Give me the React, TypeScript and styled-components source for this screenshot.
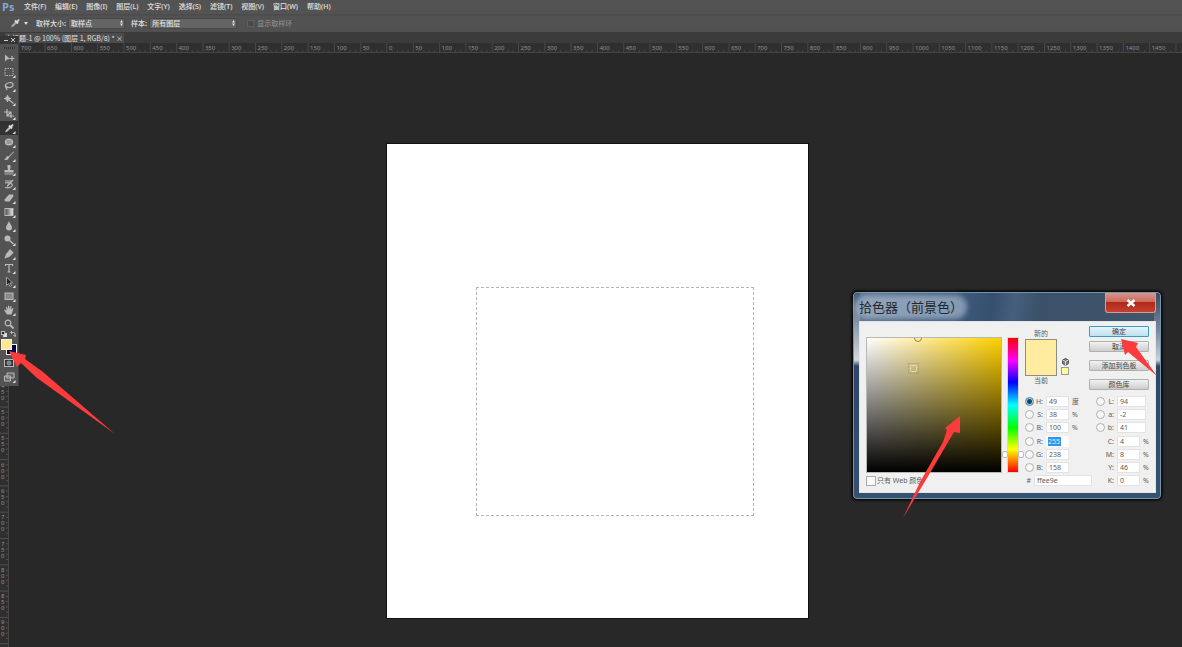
import React, { useEffect, useState } from 'react';
import styled, { createGlobalStyle, css } from 'styled-components';

const GlobalStyle = createGlobalStyle`
  * { box-sizing: border-box; }
  html, body, #root { height: 100%; }
  body {
    margin: 0;
    background: #282828;
    font-family: "Noto Sans", "Noto Sans CJK SC", sans-serif;
    font-size: 7px;
    line-height: 10px;
    color: #e2e2e2;
  }
  button, input, select { font: inherit; color: inherit; margin: 0; padding: 0; }
`;

const UI_CJK = '"Noto Sans CJK SC", "Noto Sans", sans-serif';

/* ---------- frame ---------- */

const Shell = styled.div`
  position: relative;
  display: flex;
  flex-direction: column;
  height: 100vh;
  overflow: hidden;
`;

const MenuBar = styled.nav`
  display: flex;
  align-items: center;
  gap: 1px;
  height: 14px;
  background: #535353;
`;

const Brand = styled.span`
  width: 19px;
  padding-left: 2px;
  font: 700 11px/14px "Open Sans", sans-serif;
  color: #7fa9d0;
`;

const MenuButton = styled.button`
  height: 14px;
  padding: 0 4px;
  border: 0;
  background: none;
  line-height: 14px;
  font-weight: 500;
  white-space: nowrap;
`;

const OptionsBar = styled.div`
  display: flex;
  align-items: center;
  height: 19px;
  padding-left: 10px;
  background: linear-gradient(#4a4a4a, #535353 3px, #505050);
  border-bottom: 1px solid #3a3a3a;
  font-family: ${UI_CJK};
  font-weight: 500;
`;

const ToolPreset = styled.button`
  display: flex;
  align-items: center;
  gap: 4px;
  width: 26px;
  height: 12px;
  border: 0;
  background: none;
`;

const OptionLabel = styled.label`
  padding-right: 2px;
  white-space: nowrap;
`;

const SelectBox = styled.span<{ $width: number }>`
  display: flex;
  align-items: center;
  width: ${(p) => p.$width}px;
  height: 11px;
  margin-right: 6px;
  padding-right: 1px;
  background: #646464;
  border: 1px solid #484848;
`;

const PlainSelect = styled.select`
  flex: 1;
  min-width: 0;
  height: 9px;
  padding-left: 2px;
  border: 0;
  background: none;
  appearance: none;
  line-height: 9px;
`;

const RingOption = styled.label`
  display: flex;
  align-items: center;
  gap: 3px;
  padding-left: 4px;
  color: #8a8a8a;
`;

const DarkCheck = styled.input`
  appearance: none;
  width: 7px;
  height: 7px;
  border: 1px solid #5e5e5e;
  background: #484848;
`;

const TabBar = styled.div`
  display: flex;
  height: 10px;
  padding-left: 5px;
  background: #3b3b3b;
`;

const DocTab = styled.div`
  display: flex;
  justify-content: space-between;
  width: 119px;
  padding-right: 2px;
  background: #4c4c4c;
  font-family: ${UI_CJK};
  white-space: nowrap;
`;

const TabClose = styled.button`
  width: 6px;
  height: 10px;
  border: 0;
  background: none;
  line-height: 10px;
`;

const TopRuler = styled.svg`
  flex: none;
  display: block;
  width: 100%;
  height: 10px;
  background: #2f2f2f;
  border-bottom: 1px solid #444;
`;

const Workspace = styled.div`
  display: flex;
  flex: 1;
  min-height: 0;
`;

const SideRuler = styled.svg`
  flex: none;
  width: 9px;
  height: 100%;
  background: #2f2f2f;
  border-right: 1px solid #484848;
`;

const Stage = styled.main`
  position: relative;
  flex: 1;
  overflow: hidden;
  background: #282828;
`;

const Artboard = styled.section`
  position: absolute;
  left: 377px;
  top: 90px;
  width: 423px;
  height: 476px;
  border: 1px solid #111;
  background: #fff;
`;

const Marquee = styled.div`
  position: absolute;
  left: 89px;
  top: 143px;
  width: 278px;
  height: 229px;
  border: 1px dashed #b4b4b4;
`;

/* ---------- tools ---------- */

const ToolPanel = styled.aside`
  position: absolute;
  left: 0;
  top: 36px;
  width: 19px;
  padding-bottom: 2px;
  background: #535353;
  border-right: 1px solid #404040;
`;

const ToolHead = styled.div`
  display: flex;
  align-items: center;
  justify-content: flex-end;
  gap: 3px;
  height: 8px;
  padding-right: 2px;
  background: #353535;
`;

const Grip = styled.div`
  width: 11px;
  height: 2px;
  margin: 3px auto 2px;
  background: repeating-linear-gradient(90deg, #333 0 1px, #535353 1px 2px);
`;

const ToolButton = styled.button<{ $active?: boolean }>`
  display: flex;
  align-items: center;
  justify-content: center;
  width: 18px;
  height: 14px;
  border: 0;
  background: ${(p) => (p.$active ? '#323232' : 'none')};
  color: #bababa;
`;

const MiniRow = styled.div`
  display: flex;
  justify-content: space-between;
  padding: 0 2px 2px 1px;
  color: #bababa;
`;

const SwatchPair = styled.div`
  position: relative;
  height: 17px;
`;

const ToolSwatch = styled.button<{ $color: string; $back?: boolean }>`
  position: absolute;
  width: 11px;
  height: 11px;
  border: 1px solid #f4f0dc;
  background: ${(p) => p.$color};
  ${(p) => (p.$back ? css`right: 1px; bottom: 1px;` : css`left: 1px; top: 0;`)}
`;

/* ---------- colour picker ---------- */

const Dialog = styled.form`
  position: absolute;
  right: 20px;
  top: 238px;
  width: 310px;
  padding: 0 5px 6px 6px;
  border: 1px solid #0a0a0a;
  border-radius: 5px;
  box-shadow: inset 0 0 0 1px #6f97ad, 0 0 2px 1px #111;
  background:
    linear-gradient(#40597a 0, #9aa7b6 40px, #d3d8dd 68px, #2e4663 74px, #36526f) left / 7px 100% no-repeat,
    linear-gradient(#33475e 0, #7d8c9d 40px, #c9d2da 68px, #2e4663 74px, #36526f) right / 7px 100% no-repeat,
    linear-gradient(100deg, #5c7390 0, #3e597d 35%, #364f6e 45%, #465f7c 52%, #3a5169 60%, #3f566c 100%) top / 100% 40px no-repeat,
    #36526f;
  color: #5c5c5c;
`;

const TitleBar = styled.header`
  display: flex;
  justify-content: space-between;
  height: 29px;
`;

const Title = styled.h1`
  height: 16px;
  margin: 7px 0 0;
  border-radius: 8px;
  background: rgba(190, 205, 222, 0.55);
  box-shadow: 0 0 5px 4px rgba(190, 205, 222, 0.55);
  font: 400 13px/16px ${UI_CJK};
  color: #23282f;
  white-space: nowrap;
`;

const CloseButton = styled.button`
  display: flex;
  align-items: center;
  justify-content: center;
  width: 51px;
  height: 20px;
  margin-top: 1px;
  border: 1px solid #d99a92;
  border-top: 0;
  border-radius: 0 0 3px 3px;
  background: linear-gradient(#d9968c 0, #cc6a5c 45%, #b02a1a 50%, #c4412f 100%);
`;

const Client = styled.div`
  display: flex;
  height: 172px;
  padding-left: 6px;
  border: 1px solid #e2e6ea;
  background: #f0f0f0;
`;

const FieldColumn = styled.div`
  width: 136px;
  padding-top: 15px;
`;

const ColorField = styled.div`
  position: relative;
  height: 136px;
  border: 1px solid #b9b9b4;
  background: linear-gradient(transparent, #000), linear-gradient(90deg, #fff, #ffd000);
  overflow: hidden;
`;

const FieldMarks = styled.svg`
  display: block;
`;

const CheckLabel = styled.label`
  display: flex;
  align-items: center;
  gap: 1px;
  margin-top: 3px;
`;

const WebCheck = styled.input`
  appearance: none;
  width: 10px;
  height: 10px;
  border: 1px solid #aaa;
  background: #fafafa;
`;

const HueColumn = styled.div`
  position: relative;
  width: 23px;
  padding: 15px 6px 0 5px;
`;

const HueBar = styled.div`
  height: 136px;
  background: linear-gradient(#f00, #f0f 17%, #00f 33%, #0ff 50%, #0f0 67%, #ff0 83%, #f00);
  border: 1px solid #d5d5d5;
`;

const HueKnobs = styled.div`
  position: absolute;
  left: 0;
  right: 1px;
  top: 129px;
  display: flex;
  justify-content: space-between;
  &::before, &::after {
    content: "";
    width: 4px;
    height: 5px;
    border: 1px solid #bcbcbc;
    border-radius: 2px;
    background: #fff;
  }
`;

const Controls = styled.div`
  flex: 1;
  min-width: 0;
`;

const UpperControls = styled.div`
  display: flex;
  height: 73px;
`;

const Preview = styled.div`
  display: flex;
  flex-direction: column;
  align-items: center;
  width: 32px;
  padding-top: 7px;
`;

const PreviewColor = styled.div`
  width: 32px;
  height: 37px;
  border: 1px solid #8f8c80;
  background: #ffec9e;
`;

const Warnings = styled.div`
  display: flex;
  flex-direction: column;
  align-items: center;
  gap: 1px;
  width: 16px;
  padding-top: 36px;
`;

const SafeSwatch = styled.button`
  width: 8px;
  height: 8px;
  border: 1px solid #9c9c8c;
  background: #ffffa0;
`;

const ButtonColumn = styled.div`
  display: flex;
  flex-direction: column;
  margin-left: 16px;
  padding-top: 4px;
`;

const PushButton = styled.button<{ $primary?: boolean; $gap?: number }>`
  width: 60px;
  height: 11px;
  margin-bottom: ${(p) => p.$gap ?? 8}px;
  border: 1px solid ${(p) => (p.$primary ? '#3f9bc4' : '#b0b0b0')};
  border-radius: 1px;
  background: ${(p) =>
    p.$primary ? 'linear-gradient(#e6f3f8, #bfe2f0)' : 'linear-gradient(#f2f2f2, #cdcdcd)'};
  line-height: 9px;
  font-family: ${UI_CJK};
  color: #444;
`;

const LowerControls = styled.div`
  display: flex;
  gap: 4px;
`;

const Rows = styled.div`
  display: flex;
  flex-direction: column;
  gap: 1px;
`;

const LeftRows = styled(Rows)`
  width: 67px;
`;

const Group = styled.div`
  display: flex;
  flex-direction: column;
`;

const FieldRow = styled.div`
  display: flex;
  align-items: center;
  height: 13px;
`;

const Radio = styled.input`
  appearance: none;
  flex: none;
  width: 9px;
  height: 9px;
  border: 1px solid #b0b0b0;
  border-radius: 50%;
  background: #f8f8f8;
  &:checked {
    border-color: #5f7f92;
    background: radial-gradient(#0c4a6b 0 2px, #a9d3e4 3px);
  }
`;

const RowLabel = styled.label<{ $width: number }>`
  width: ${(p) => p.$width}px;
  padding-right: 3px;
  text-align: right;
`;

const Value = styled.input<{ $width: number }>`
  width: ${(p) => p.$width}px;
  height: 11px;
  padding-left: 2px;
  border: 1px solid #e3e3e3;
  background: #fff;
  line-height: 9px;
`;

const SelectedValue = styled(Value)`
  padding: 0;
  border-width: 1px 8px 1px 2px;
  border-color: #fff;
  background: #3294e8;
  color: #d7ecff;
`;

const Unit = styled.span`
  padding-left: 3px;
`;

/* Hand-drawn callout arrows lie over everything else. */
const Callout = styled.svg<{ $x: number; $y: number }>`
  position: absolute;
  left: ${(p) => p.$x}px;
  top: ${(p) => p.$y}px;
  overflow: visible;
  pointer-events: none;
  fill: #fb3b3c;
`;

/* ---------- data ---------- */

const menus = ['文件(F)', '编辑(E)', '图像(I)', '图层(L)', '文字(Y)', '选择(S)', '滤镜(T)', '视图(V)', '窗口(W)', '帮助(H)'];

const line = { fill: 'none', stroke: 'currentColor', strokeWidth: 1.2 } as const;

const tools: { name: string; plain?: boolean; art: React.ReactNode }[] = [
  { name: '移动', plain: true, art: <><path d="M1 1.5v7l2-2 3-.5z" fill="currentColor" /><path d="M8 3v5M5.5 5.5h5" {...line} /></> },
  { name: '矩形选框', art: <rect x="1" y="1.5" width="8" height="7" {...line} strokeWidth="1" strokeDasharray="1.5 1" /> },
  { name: '套索', art: <path d="M2 6.500C0 4 3 1.5 6.500 1.500c4 .2 3 4.500-.5 5C3.500 7 1.500 5.500 2.500 5M2 6.500l1 2.500" {...line} /> },
  { name: '快速选择', art: <><circle cx="3.500" cy="3.500" r="2.300" fill="currentColor" /><path d="M4 4l5.500 4.500M0 3.500h7M3.500 0v7" {...line} /></> },
  { name: '裁剪', art: <path d="M3 0v7h7M0 3h7v6M3 7l4-4" {...line} /> },
  { name: '吸管', art: <><path d="M1 9.500l1-2.500 4-4 1.500 1.500-4 4z" fill="#bbb" /><path d="M5 2.500l3 3M7 4l2-2.500" stroke="#ddd" strokeWidth="2" /></> },
  { name: '修复画笔', art: <><ellipse cx="5" cy="5" rx="4.200" ry="3.600" fill="currentColor" /><path d="M2.500 4h5M2.500 6h5" stroke="#777" /></> },
  { name: '画笔', art: <path d="M9.500.5L4.500 5.500 3.500 5C2 5.500 2 8 0 8.500c2 1 4.500.5 5-2L10 1z" fill="currentColor" /> },
  { name: '仿制图章', art: <path d="M3.500 0h3v2.500L6 5h3.500v2.500h-9V5H4l-.5-2.500zM.5 8.500h9v1h-9z" fill="currentColor" /> },
  { name: '历史记录画笔', art: <path d="M1 2h7L3 7.500M1 4c4-1 8 0 7 3-1 2-5 2-7 1.500M9 1L4 6" {...line} /> },
  { name: '橡皮擦', art: <path d="M5 1.500h4.500L9 4 5.500 8.500H1L.5 6.500z" fill="currentColor" /> },
  { name: '渐变', art: <><defs><linearGradient id="toolGrad"><stop stopColor="#444" /><stop offset="1" stopColor="#eee" /></linearGradient></defs><rect x="1" y="1.500" width="8" height="7" fill="url(#toolGrad)" stroke="currentColor" /></> },
  { name: '模糊', art: <path d="M5 0C6 3 8 4.500 8 6.500a3 3 0 0 1-6 0C2 4.500 4 3 5 0z" fill="currentColor" /> },
  { name: '减淡', art: <><circle cx="3.500" cy="3.500" r="3" fill="currentColor" /><path d="M5.500 5.500L9.500 9" {...line} strokeWidth="1.600" /></> },
  { name: '钢笔', art: <path d="M6 0l3.500 3.500L8 5.500 5 8 .5 9.500 2 5l2.500-3zM1 9l3-3" fill="currentColor" /> },
  { name: '文字', art: <path d="M1.500 3V1.500h7V3M5 1.500V9M3.500 9h3" {...line} /> },
  { name: '路径选择', art: <path d="M2.500 0v8.500l2-2 1.500 3 1.500-1-1.500-2.500h2.500z" fill="#222" stroke="currentColor" strokeWidth=".8" /> },
  { name: '矩形', art: <rect x="1" y="2" width="8" height="6.500" fill="#8a8a8a" stroke="currentColor" /> },
  { name: '抓手', art: <path d="M3 9.500L0 5l1-.5 1.500 1.500L2 2l1-.3L4 4.500V.7h1.200l.3 3.500L6.500 1l1 .3L7 5l1.500-2 1 .5L7.500 9.500z" fill="currentColor" /> },
  { name: '缩放', plain: true, art: <><circle cx="4" cy="4" r="2.800" {...line} /><path d="M6 6l3.500 3.500" {...line} strokeWidth="1.800" /></> },
];

/* Screen distance of 50 document pixels, and where document zero lies on each ruler. */
const RULER_STEP = 26.3;
const ORIGIN_X = 387;
const ORIGIN_Y = 91;
const FIRST_COLUMN = -14;
const FIRST_ROW = 9;

function useWindowSize() {
  const read = () => ({ width: window.innerWidth, height: window.innerHeight });
  const [size, setSize] = useState(read);
  useEffect(() => {
    const update = () => setSize(read());
    window.addEventListener('resize', update);
    return () => window.removeEventListener('resize', update);
  }, []);
  return size;
}

const range = (first: number, last: number) =>
  Array.from({ length: Math.max(0, last - first + 1) }, (_, i) => first + i);

function HorizontalRuler({ width }: { width: number }) {
  const last = Math.floor((width - ORIGIN_X) / RULER_STEP);
  return (
    <TopRuler fontSize="6" fill="#8f8f8f">
      {range(FIRST_COLUMN, last).map((k) => {
        const x = ORIGIN_X + k * RULER_STEP;
        return (
          <g key={k}>
            <path d={`M${x} 0V10`} stroke="#484848" />
            {[1, 2, 3, 4].map((m) => (
              <path key={m} d={`M${x + (m * RULER_STEP) / 5} 7V10`} stroke="#444" />
            ))}
            {x + 16 < width && <text x={x + 2} y="7">{Math.abs(k * 50)}</text>}
          </g>
        );
      })}
    </TopRuler>
  );
}

function VerticalRuler({ height }: { height: number }) {
  const last = Math.floor((height - 53 - ORIGIN_Y) / RULER_STEP);
  return (
    <SideRuler fontSize="6" fill="#8f8f8f">
      {range(FIRST_ROW, last).map((k) => {
        const y = ORIGIN_Y + k * RULER_STEP;
        return (
          <g key={k}>
            <path d={`M0 ${y}H8`} stroke="#505050" />
            {[1, 2, 3, 4].map((m) => (
              <path key={m} d={`M6 ${y + (m * RULER_STEP) / 5}H8`} stroke="#505050" />
            ))}
            {y + 74 < height &&
              String(k * 50).split('').map((d, i) => (
                <text key={i} x="1" y={y + 7 + i * 6}>{d}</text>
              ))}
          </g>
        );
      })}
    </SideRuler>
  );
}

function Dropdown({ id, label, value, width }: { id: string; label: string; value: string; width: number }) {
  return (
    <>
      <OptionLabel htmlFor={id}>{label}</OptionLabel>
      <SelectBox $width={width}>
        <PlainSelect id={id} defaultValue={value}>
          <option>{value}</option>
        </PlainSelect>
        <svg width="3" height="6" viewBox="0 0 3 6" fill="#ddd"><path d="M0 2.500L1.500 0 3 2.500zM0 3.500h3L1.500 6z" /></svg>
      </SelectBox>
    </>
  );
}

type Channel = { id: string; label: string; value: string; unit?: string; checked?: boolean; selected?: boolean };

function ChannelRow({ c, radio = true, wide }: { c: Channel; radio?: boolean; wide?: boolean }) {
  const Box = c.selected ? SelectedValue : Value;
  return (
    <FieldRow>
      {radio && <Radio type="radio" name="channel" aria-label={c.label} defaultChecked={c.checked} />}
      <RowLabel htmlFor={c.id} $width={radio ? 12 : 21}>{c.label}</RowLabel>
      <Box id={c.id} $width={wide ? 29 : 23} defaultValue={c.value} />
      {c.unit && <Unit>{c.unit}</Unit>}
    </FieldRow>
  );
}

const hsb: Channel[] = [
  { id: 'hue', label: 'H:', value: '49', unit: '度', checked: true },
  { id: 'sat', label: 'S:', value: '38', unit: '%' },
  { id: 'bri', label: 'B:', value: '100', unit: '%' },
];
const rgb: Channel[] = [
  { id: 'red', label: 'R:', value: '255', selected: true },
  { id: 'green', label: 'G:', value: '238' },
  { id: 'blue', label: 'B:', value: '158' },
];
const lab: Channel[] = [
  { id: 'labL', label: 'L:', value: '94' },
  { id: 'labA', label: 'a:', value: '-2' },
  { id: 'labB', label: 'b:', value: '41' },
];
const cmyk: Channel[] = [
  { id: 'cyan', label: 'C:', value: '4', unit: '%' },
  { id: 'magenta', label: 'M:', value: '8', unit: '%' },
  { id: 'yellow', label: 'Y:', value: '46', unit: '%' },
  { id: 'key', label: 'K:', value: '0', unit: '%' },
];

function ColorPicker() {
  return (
    <Dialog onSubmit={(e) => e.preventDefault()}>
      <TitleBar>
        <Title>拾色器（前景色）</Title>
        <CloseButton type="button" aria-label="关闭">
          <svg width="10" height="8" viewBox="0 0 10 8"><path d="M1.500 1l7 6M8.500 1l-7 6" stroke="#fff" strokeWidth="2.400" /></svg>
        </CloseButton>
      </TitleBar>
      <Client>
        <FieldColumn>
          <ColorField>
            <FieldMarks width="134" height="134" fill="none">
              <circle cx="51" cy="0" r="3.500" stroke="#8f8560" />
              <rect x="43.500" y="27.500" width="6" height="6" rx="1" stroke="#e6dca8" />
              <rect x="41.500" y="25.500" width="10" height="10" stroke="#8f8a70" strokeDasharray="1 2" />
            </FieldMarks>
          </ColorField>
          <CheckLabel><WebCheck type="checkbox" />只有 Web 颜色</CheckLabel>
        </FieldColumn>
        <HueColumn>
          <HueBar />
          <HueKnobs />
        </HueColumn>
        <Controls>
          <UpperControls>
            <Preview>
              新的
              <PreviewColor />
              当前
            </Preview>
            <Warnings>
              <svg width="7" height="8" viewBox="0 0 7 8"><path d="M3.500.5l3 1.500v3.500l-3 2-3-2V2z" fill="#777" stroke="#555" /><path d="M.5 2l3 1.500 3-1.500M3.500 3.500v4" stroke="#ddd" fill="none" /></svg>
              <SafeSwatch type="button" aria-label="Web 安全颜色" />
            </Warnings>
            <ButtonColumn>
              <PushButton $primary $gap={4}>确定</PushButton>
              <PushButton type="button">取消</PushButton>
              <PushButton type="button">添加到色板</PushButton>
              <PushButton type="button">颜色库</PushButton>
            </ButtonColumn>
          </UpperControls>
          <LowerControls>
            <LeftRows>
              <Group>{hsb.map((c) => <ChannelRow key={c.id} c={c} />)}</Group>
              <Group>
                {rgb.map((c) => <ChannelRow key={c.id} c={c} />)}
                <FieldRow>
                  <RowLabel htmlFor="hex" $width={9}>#</RowLabel>
                  <Value id="hex" $width={58} defaultValue="ffee9e" />
                </FieldRow>
              </Group>
            </LeftRows>
            <Rows>
              <Group>{lab.map((c) => <ChannelRow key={c.id} c={c} wide />)}</Group>
              <Group>{cmyk.map((c) => <ChannelRow key={c.id} c={c} radio={false} />)}</Group>
            </Rows>
          </LowerControls>
        </Controls>
      </Client>
      <Callout $x={50} $y={124} width="57" height="102" viewBox="0 0 57 102">
        <path d="M57 0V17l-6-1-27 46L0 102 17 66 40 26l4-12-2-2z" />
      </Callout>
      <Callout $x={268} $y={47} width="36" height="37" viewBox="0 0 36 37">
        <path d="M0 0l17 4-2 4 21 29L7 13l-3 3z" />
      </Callout>
    </Dialog>
  );
}

export default function App() {
  const { width, height } = useWindowSize();
  return (
    <Shell>
      <GlobalStyle />
      <MenuBar>
        <Brand>Ps</Brand>
        {menus.map((m) => <MenuButton key={m}>{m}</MenuButton>)}
      </MenuBar>
      <OptionsBar>
        <ToolPreset aria-label="吸管工具预设">
          <svg width="10" height="10" viewBox="0 0 10 10"><path d="M1 9.500l1-2.500 4-4 1.500 1.500-4 4z" fill="#aaa" /><path d="M5 2.500l3 3M7 4l2-2.500" stroke="#ddd" strokeWidth="1.800" /></svg>
          <svg width="4" height="3" viewBox="0 0 4 3"><path d="M0 0h4L2 3z" fill="#ddd" /></svg>
        </ToolPreset>
        <Dropdown id="sample-size" label="取样大小:" value="取样点" width={57} />
        <Dropdown id="sample-from" label="样本:" value="所有图层" width={88} />
        <RingOption><DarkCheck type="checkbox" disabled />显示取样环</RingOption>
      </OptionsBar>
      <TabBar>
        <DocTab>
          <span>未标题-1 @ 100% (图层 1, RGB/8) *</span>
          <TabClose aria-label="关闭文档">×</TabClose>
        </DocTab>
      </TabBar>
      <HorizontalRuler width={width} />
      <Workspace>
        <VerticalRuler height={height} />
        <Stage>
          <Artboard><Marquee /></Artboard>
          <ColorPicker />
        </Stage>
      </Workspace>
      <ToolPanel>
        <ToolHead>
          <svg width="12" height="6" viewBox="0 0 12 6" stroke="#ccc" fill="none"><path d="M0 3.500h4M7 1l4 4M11 1L7 5" /></svg>
        </ToolHead>
        <Grip />
        {tools.map((t) => (
          <ToolButton key={t.name} aria-label={t.name} $active={t.name === '吸管'}>
            <svg width="13" height="12" viewBox="-1 -1 13 12">
              {t.art}
              {!t.plain && <path d="M11.500 8v3h-3z" fill="#ddd" />}
            </svg>
          </ToolButton>
        ))}
        <MiniRow>
          <svg width="6" height="6" viewBox="0 0 6 6"><rect x="2" y="2" width="4" height="4" fill="#ddd" /><rect x=".5" y=".5" width="3" height="3" fill="#222" stroke="#bbb" /></svg>
          <svg width="6" height="6" viewBox="0 0 6 6"><path d="M1 1.500h2.500q1.500 0 1.500 1.500v2.500M2 0L.5 1.500 2 3M3.500 4L5 5.500 6 4" fill="none" stroke="currentColor" /></svg>
        </MiniRow>
        <SwatchPair>
          <ToolSwatch $color="#00004a" $back aria-label="背景色" />
          <ToolSwatch $color="#fee795" aria-label="前景色" />
        </SwatchPair>
        <ToolButton aria-label="快速蒙版">
          <svg width="10" height="8" viewBox="0 0 10 8"><rect x=".5" y=".5" width="9" height="7" fill="#333" stroke="currentColor" /><circle cx="5" cy="4" r="2" fill="#6b7f8c" stroke="#999" /></svg>
        </ToolButton>
        <ToolButton aria-label="屏幕模式">
          <svg width="13" height="12" viewBox="-1 -1 13 12"><path d="M3 1h7v5H3zM.5 4h6v5h-6z" fill="#666" stroke="currentColor" /><path d="M11.500 8v3h-3z" fill="#ddd" /></svg>
        </ToolButton>
      </ToolPanel>
      <Callout $x={9} $y={351} width="106" height="83" viewBox="0 0 106 83">
        <path d="M0 0l17 4-1 4 18 13 72 62L28 27l-16-15-4 4z" />
      </Callout>
    </Shell>
  );
}
